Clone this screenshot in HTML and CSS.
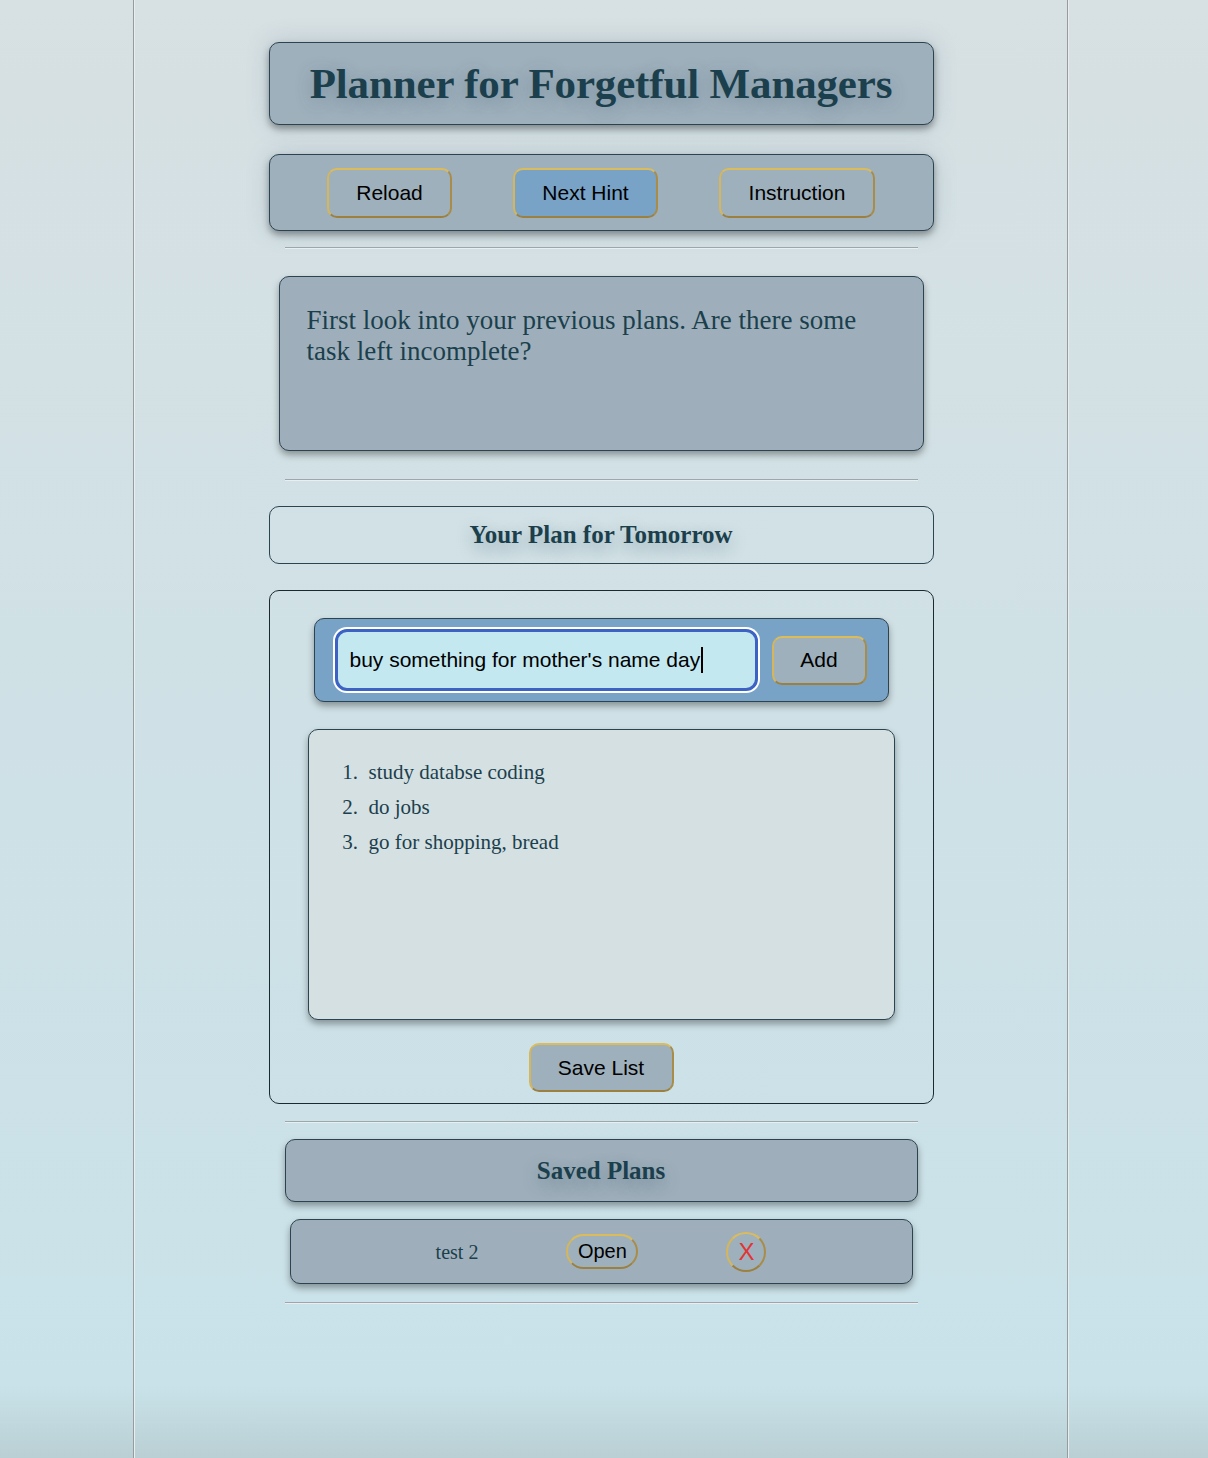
FILE: index.html
```html
<!DOCTYPE html>
<html lang="en">
<head>
    <meta charset="UTF-8">
    <meta name="viewport" content="width=device-width, initial-scale=1.0">
    <title>Planner for Forgetful Managers</title>
    <link rel="stylesheet" href="styles.css">
</head>
<body>
    <div class="page">
        <div class="header">
            <h1>Planner for Forgetful Managers</h1>
        </div>

        <div class="nav-box">
            <button class="btn">Reload</button>
            <button class="btn btn-active">Next Hint</button>
            <button class="btn">Instruction</button>
        </div>

        <hr>

        <div class="hint-box">
            <p>First look into your previous plans. Are there some task left incomplete?</p>
        </div>

        <hr>

        <div class="plan-title">
            <h2>Your Plan for Tomorrow</h2>
        </div>

        <div class="plan-box">
            <div class="add-row">
                <div class="task-input">buy something for mother's name day<span class="caret"></span></div>
                <button class="btn btn-add">Add</button>
            </div>

            <div class="list-box">
                <ol>
                    <li>study databse coding</li>
                    <li>do jobs</li>
                    <li>go for shopping, bread</li>
                </ol>
            </div>

            <button class="btn btn-save">Save List</button>
        </div>

        <hr>

        <div class="saved-title">
            <h2>Saved Plans</h2>
        </div>

        <div class="saved-item">
            <span class="saved-name">test 2</span>
            <button class="btn btn-open">Open</button>
            <button class="btn btn-del">X</button>
        </div>

        <hr>
    </div>
</body>
</html>
```

FILE: styles.css
```css
* {
    box-sizing: border-box;
}
html {
    min-height: 100%;
    background: linear-gradient(to bottom, #d7e0e3 0%, #cfe1e6 50%, #c9e2e9 95%, #b9cfd4 100%);
}
body {
    margin: 0;
    font-family: "Liberation Serif", "Times New Roman", serif;
    color: #1b3f4c;
}
.page {
    width: 936px;
    min-height: 1458px;
    margin: 0 auto;
    padding-top: 42px;
    border-left: 2px groove #e8eef0;
    border-right: 2px groove #e8eef0;
    position: relative;
    left: -3px;
}
.header, .nav-box, .plan-title, .plan-box {
    width: 665px;
    margin-left: auto;
    margin-right: auto;
    border: 1px solid #2c4450;
    border-radius: 10px;
}
.header {
    height: 83px;
    background-color: #9eb0bc;
    box-shadow: 0 4px 7px rgba(0, 0, 0, 0.35), 0 0 22px rgba(90, 120, 140, 0.25);
    display: flex;
    align-items: center;
    justify-content: center;
}
.header h1 {
    margin: 0;
    font-size: 43px;
    font-weight: bold;
    letter-spacing: -0.15px;
    text-shadow: 0 4px 18px rgba(40, 70, 90, 0.3);
}
.nav-box {
    margin-top: 29px;
    height: 77px;
    background-color: #9eb0bc;
    box-shadow: 0 4px 7px rgba(0, 0, 0, 0.35), 0 0 22px rgba(90, 120, 140, 0.25);
    display: flex;
    align-items: center;
    justify-content: center;
    gap: 61px;
}
.btn {
    font-family: "Liberation Sans", Arial, sans-serif;
    font-size: 21px;
    color: #000;
    background-color: #9eb0bc;
    border: 2px solid;
    border-color: #dcbc5a #a98c47 #9c8040 #d6b658;
    border-radius: 10px;
    cursor: pointer;
    padding: 0;
}
.nav-box .btn {
    height: 50px;
}
.nav-box .btn:nth-child(1) {
    width: 125px;
}
.nav-box .btn:nth-child(3) {
    width: 156px;
}
.btn-active {
    width: 145px;
    background-color: #78a3c7;
}
hr {
    width: 633px;
    margin: 16px auto 0 auto;
    border: none;
    border-top: 1px solid #9ea6a9;
    border-bottom: 1px solid #e9eff1;
}
.hint-box {
    width: 645px;
    height: 175px;
    margin: 27px auto 0 auto;
    padding: 28px 27px;
    background-color: #9eafbb;
    border: 1px solid #2c4450;
    border-radius: 10px;
    box-shadow: 0 4px 7px rgba(0, 0, 0, 0.35);
}
.hint-box p {
    margin: 0;
    font-size: 27px;
    line-height: 31px;
}
.hint-box + hr {
    margin-top: 28px;
}
.plan-title {
    margin-top: 25px;
    height: 58px;
    display: flex;
    align-items: center;
    justify-content: center;
}
.plan-title h2, .saved-title h2 {
    margin: 0;
    font-size: 25px;
    font-weight: bold;
    text-shadow: 0 6px 16px rgba(40, 70, 90, 0.35);
}
.plan-box {
    margin-top: 26px;
    height: 514px;
    padding-top: 27px;
    border-color: #1a2a30;
    display: flex;
    flex-direction: column;
    align-items: center;
}
.add-row {
    width: 575px;
    height: 84px;
    background-color: #78a3c7;
    border: 1px solid #2c4450;
    border-radius: 10px;
    box-shadow: 0 4px 7px rgba(0, 0, 0, 0.35);
    display: flex;
    align-items: center;
    padding: 0 21px 0 20px;
    gap: 14px;
}
.task-input {
    width: 423px;
    height: 62px;
    background-color: #c3e8f0;
    border: 3px solid #3c62c4;
    border-radius: 12px;
    box-shadow: 0 0 0 2px #ffffff;
    font-family: "Liberation Sans", Arial, sans-serif;
    font-size: 21px;
    color: #000;
    display: flex;
    align-items: center;
    padding-left: 12px;
}
.caret {
    display: inline-block;
    width: 2px;
    height: 26px;
    background: #000;
    margin-left: 1px;
}
.btn-add {
    width: 95px;
    height: 49px;
    margin-left: auto;
}
.list-box {
    width: 587px;
    height: 291px;
    margin-top: 27px;
    background-color: #d5e0e3;
    border: 1px solid #2c4450;
    border-radius: 10px;
    box-shadow: 0 4px 7px rgba(0, 0, 0, 0.35);
}
.list-box ol {
    margin: 0;
    padding: 25px 0 0 60px;
    font-size: 21px;
    line-height: 35px;
}
.list-box li::marker {
    content: counter(list-item) ".\00a0\00a0";
}
.btn-save {
    width: 145px;
    height: 49px;
    margin-top: 23px;
}
.plan-box + hr {
    margin-top: 17px;
}
.saved-title {
    width: 633px;
    height: 63px;
    margin: 16px auto 0 auto;
    background-color: #9eafbb;
    border: 1px solid #2c4450;
    border-radius: 10px;
    box-shadow: 0 4px 7px rgba(0, 0, 0, 0.35);
    display: flex;
    align-items: center;
    justify-content: center;
}
.saved-item {
    width: 623px;
    height: 65px;
    margin: 17px auto 0 auto;
    background-color: #9eafbb;
    border: 1px solid #2c4450;
    border-radius: 10px;
    box-shadow: 0 4px 7px rgba(0, 0, 0, 0.35);
    display: flex;
    align-items: center;
    justify-content: center;
    gap: 88px;
}
.saved-item + hr {
    margin-top: 18px;
}
.saved-name {
    font-size: 20px;
    padding-top: 2px;
}
.btn-open {
    width: 72px;
    height: 35px;
    border-radius: 18px;
    font-size: 20px;
}
.btn-del {
    width: 40px;
    height: 40px;
    border-radius: 50%;
    color: #e23434;
    font-size: 24px;
}
```
